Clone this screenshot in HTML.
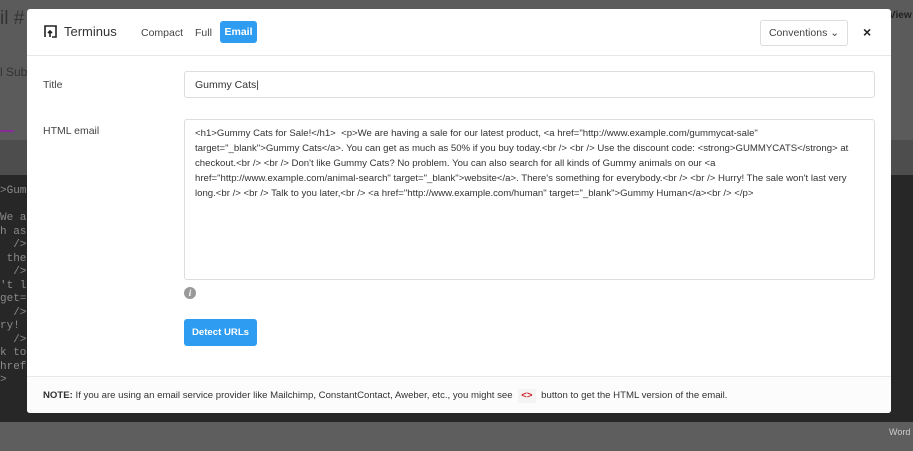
<!DOCTYPE html>
<html><head><meta charset="utf-8"><style>
*{box-sizing:border-box;margin:0;padding:0}
body{width:913px;height:451px;overflow:hidden;position:relative;background:#595959;font-family:"Liberation Sans",sans-serif;}
.bg1{position:absolute;left:0;top:0;width:913px;height:140px;background:#5b5b5b}
.bg2{position:absolute;left:0;top:140px;width:913px;height:35px;background:#4d4d4d}
.bg3{position:absolute;left:0;top:175px;width:913px;height:247px;background:#272727}
.bg4{position:absolute;left:0;top:422px;width:913px;height:29px;background:#5e5e5e}
.code{position:absolute;left:0;top:185px;font-family:"Liberation Mono",monospace;font-size:11px;line-height:13.5px;color:#8a8a8a;white-space:pre}
.modal{position:absolute;left:27px;top:9px;width:864px;height:404px;background:#fff;border-radius:3px;overflow:hidden}
.hdr{height:47px;border-bottom:1px solid #e8e8e8;position:relative}
.logo{position:absolute;left:17px;top:16px}
.brand{position:absolute;left:37px;top:15px;font-size:13px;color:#333}
.tab{position:absolute;top:18px;font-size:10.5px;color:#444}
.email{position:absolute;left:193px;top:12px;width:37px;height:22px;background:#2e9cf0;border-radius:3px;color:#fff;font-size:10.5px;font-weight:bold;text-align:center;line-height:22px}
.conv{position:absolute;left:733px;top:11px;width:88px;height:26px;border:1px solid #ddd;border-radius:3px;font-size:10.5px;color:#444;line-height:25px;text-align:center}
.x{position:absolute;left:836px;top:15px;font-size:14px;font-weight:bold;color:#222}
.lbl{position:absolute;left:16px;font-size:10.5px;color:#444}
.inp{position:absolute;left:157px;top:62px;width:691px;height:27px;border:1px solid #ddd;border-radius:3px;font-size:10.5px;color:#333;padding-left:10px;line-height:26px}
.ta{position:absolute;left:157px;top:110px;width:691px;height:161px;border:1px solid #ddd;border-radius:3px;font-size:9.6px;color:#333;padding:6px 10px;line-height:15px;white-space:pre;overflow:hidden}
.info{position:absolute;left:157px;top:278px;width:12px;height:12px;border-radius:50%;background:#999;color:#fff;font-size:9px;font-weight:bold;text-align:center;line-height:12px;font-family:"Liberation Serif",serif;font-style:italic}
.btn{position:absolute;left:157px;top:310px;width:73px;height:27px;background:#2e9cf0;border-radius:3px;color:#fff;font-size:9.6px;font-weight:bold;text-align:center;line-height:27px}
.ftr{position:absolute;left:0;top:367px;width:864px;height:37px;border-top:1px solid #e8e8e8;background:#fcfcfc;font-size:9.6px;color:#333;padding-left:16px;line-height:38px}
.ic{display:inline-block;background:#f4f4f4;color:#d0202a;font-weight:bold;padding:0 3px;margin:0 3px;line-height:14px}
</style></head><body>
<div class="bg1"></div><div class="bg2"></div><div class="bg3"></div><div class="bg4"></div>
<div style="position:absolute;left:0;top:8px;font-size:19px;color:#333">il #</div>
<div style="position:absolute;left:0;top:65px;font-size:12px;color:#333">l Sub</div>
<div style="position:absolute;left:0;top:130px;width:14px;height:2px;background:#8a2a9a"></div>
<div style="position:absolute;left:889px;top:10px;font-size:10px;color:#222;font-weight:bold">View</div>
<div style="position:absolute;left:889px;top:427px;font-size:9px;color:#ccc">Word</div>
<div class="code">&gt;Gum

We a
h as
  /&gt;
 the
  /&gt;
't l
get=
  /&gt;
ry! 
  /&gt;
k to
href
&gt;</div>
<div class="modal">
<div class="hdr">
<svg class="logo" width="13" height="13" viewBox="0 0 13 13"><path d="M1 12V1h11v11H8M6 12V6M4 8l2-2 2 2" stroke="#222" stroke-width="1.6" fill="none"/></svg>
<div class="brand">Terminus</div>
<div class="tab" style="left:114px">Compact</div>
<div class="tab" style="left:168px">Full</div>
<div class="email">Email</div>
<div class="conv">Conventions &#8964;</div>
<div class="x">×</div>
</div>
<div class="lbl" style="top:70px">Title</div>
<div class="inp">Gummy Cats|</div>
<div class="lbl" style="top:116px">HTML email</div>
<div class="ta">&lt;h1&gt;Gummy Cats for Sale!&lt;/h1&gt;  &lt;p&gt;We are having a sale for our latest product, &lt;a href="http://www.example.com/gummycat-sale"
target="_blank"&gt;Gummy Cats&lt;/a&gt;. You can get as much as 50% if you buy today.&lt;br /&gt; &lt;br /&gt; Use the discount code: &lt;strong&gt;GUMMYCATS&lt;/strong&gt; at
checkout.&lt;br /&gt; &lt;br /&gt; Don't like Gummy Cats? No problem. You can also search for all kinds of Gummy animals on our &lt;a
href="http://www.example.com/animal-search" target="_blank"&gt;website&lt;/a&gt;. There's something for everybody.&lt;br /&gt; &lt;br /&gt; Hurry! The sale won't last very
long.&lt;br /&gt; &lt;br /&gt; Talk to you later,&lt;br /&gt; &lt;a href="http://www.example.com/human" target="_blank"&gt;Gummy Human&lt;/a&gt;&lt;br /&gt; &lt;/p&gt;</div>
<div class="info">i</div>
<div class="btn">Detect URLs</div>
<div class="ftr"><b>NOTE:</b> If you are using an email service provider like Mailchimp, ConstantContact, Aweber, etc., you might see <span class="ic">&lt;&gt;</span> button to get the HTML version of the email.</div>
</div>
</body></html>
